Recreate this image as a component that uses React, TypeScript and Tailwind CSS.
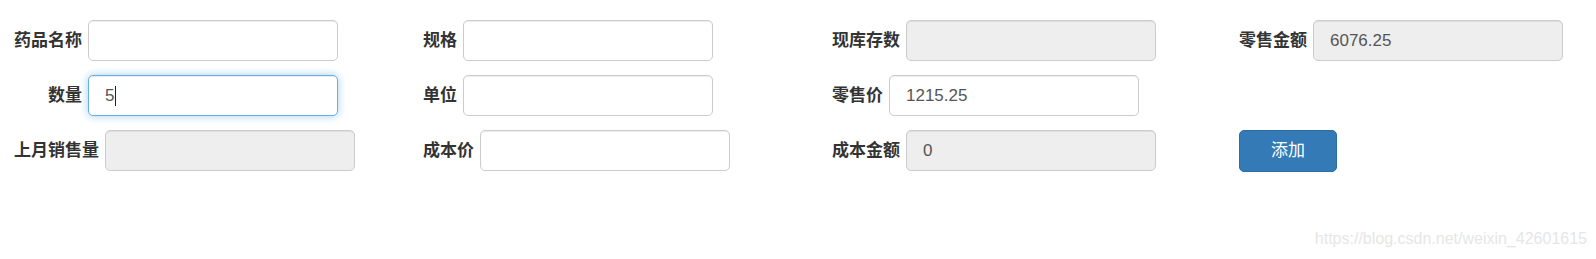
import React from "react";

const font = { fontFamily: '"Liberation Sans", "Noto Sans CJK SC", sans-serif' };

function Label({ text, w }: { text: string; w?: string }) {
  return (
    <span
      className={`shrink-0 text-[17px] font-bold text-[#333] leading-[24px] ${w ?? ""}`}
    >
      {text}
    </span>
  );
}

function Field({
  label,
  value,
  disabled,
  focused,
  labelClass,
}: {
  label: string;
  value?: string;
  disabled?: boolean;
  focused?: boolean;
  labelClass?: string;
}) {
  const base =
    "ml-[6px] h-[41px] w-[250px] rounded-[5px] border px-[16px] flex items-center text-[17px] text-[#555]";
  const cls = focused
    ? `${base} bg-white border-[#66afe9] shadow-[inset_0_1px_1px_rgba(0,0,0,0.075),0_0_8px_rgba(102,175,233,0.6)]`
    : disabled
    ? `${base} bg-[#eeeeee] border-[#cccccc] shadow-[inset_0_1px_1px_rgba(0,0,0,0.075)]`
    : `${base} bg-white border-[#cccccc] shadow-[inset_0_1px_1px_rgba(0,0,0,0.075)]`;
  return (
    <div className="flex items-center h-[41px]">
      <Label text={label} w={labelClass} />
      <div className={cls}>
        <span>{value ?? ""}</span>
        {focused && <span className="inline-block w-[1px] h-[20px] bg-[#222] ml-[1px]" />}
      </div>
    </div>
  );
}

export default function App() {
  return (
    <div className="relative h-[259px] w-[1596px] overflow-hidden bg-white" style={font}>
      <div className="pl-[14px] pt-[20px] grid grid-cols-[409px_409px_407px_1fr] gap-y-[14px]">
        <Field label="药品名称" />
        <Field label="规格" />
        <Field label="现库存数" disabled />
        <Field label="零售金额" value="6076.25" disabled />

        <Field label="数量" value="5" focused labelClass="w-[68px] text-right" />
        <Field label="单位" />
        <Field label="零售价" value="1215.25" />
        <div />

        <Field label="上月销售量" disabled />
        <Field label="成本价" />
        <Field label="成本金额" value="0" disabled />
        <div className="flex items-center h-[41px]">
          <button className="h-[42px] w-[98px] rounded-[5px] border border-[#2e6da4] bg-[#337ab7] text-white text-[17px] font-normal">
            添加
          </button>
        </div>
      </div>
      <div className="absolute right-[9px] top-[229px] text-[16px] text-[#e6e6e6] leading-[20px]">
        https://blog.csdn.net/weixin_42601615
      </div>
    </div>
  );
}
